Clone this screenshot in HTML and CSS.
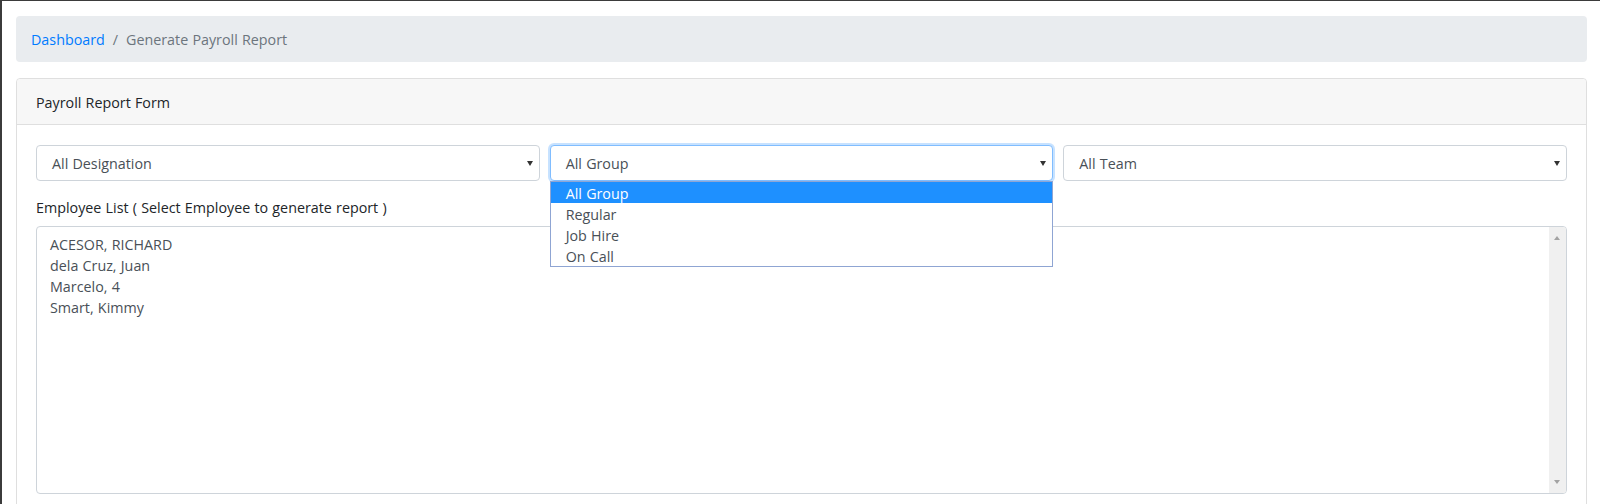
FILE: index.html
```html
<!DOCTYPE html>
<html lang="en">
<head>
<meta charset="UTF-8">
<meta name="viewport" content="width=device-width, initial-scale=1.0">
<title>Generate Payroll Report</title>
<link rel="stylesheet" href="styles.css">
</head>
<body>
<div class="frame">
    <div class="container">
        <!-- breadcrumb -->
        <nav class="breadcrumb">
            <a href="#">Dashboard</a>
            <span class="sep">/</span>
            <span class="active">Generate Payroll Report</span>
        </nav>
        <!-- form card -->
        <div class="card">
            <div class="card-header">Payroll Report Form</div>
            <div class="card-body">
                <div class="filter-row">
                    <div class="select">All Designation<span class="caret"></span></div>
                    <div class="select-wrap">
                        <div class="select focus">All Group<span class="caret"></span></div>
                        <ul class="dropdown">
                            <li class="selected">All Group</li>
                            <li>Regular</li>
                            <li>Job Hire</li>
                            <li>On Call</li>
                        </ul>
                    </div>
                    <div class="select">All Team<span class="caret"></span></div>
                </div>
                <div class="list-label">Employee List ( Select Employee to generate report )</div>
                <div class="listbox">
                    <ul class="options">
                        <li>ACESOR, RICHARD</li>
                        <li>dela Cruz, Juan</li>
                        <li>Marcelo, 4</li>
                        <li>Smart, Kimmy</li>
                    </ul>
                    <div class="scrollbar">
                        <span class="arrow up"></span>
                        <span class="arrow down"></span>
                    </div>
                </div>
            </div>
        </div>
    </div>
</div>
</body>
</html>
```
FILE: styles.css
```css
body {
    margin: 0;
    padding: 0;
    font-family: "Open Sans", "Noto Sans", sans-serif;
    font-size: 14.3px;
    line-height: 21px;
    word-spacing: 0.5px;
    color: #212529;
    background: #fff;
    height: 504px;
    overflow: hidden;
}
/* window frame */
.frame {
    border-left: 2px solid #3b3b3b;
    border-top: 1px solid #3b3b3b;
    min-height: 503px;
}
.container {
    padding: 15px 13px 0 14px;
}
/* breadcrumb */
.breadcrumb {
    display: flex;
    align-items: center;
    padding: 13px 15px 12px;
    margin-bottom: 16px;
    background-color: #e9ecef;
    border-radius: 4px;
}
.breadcrumb a {
    color: #007bff;
    text-decoration: none;
}
.breadcrumb .sep {
    color: #6c757d;
    padding: 0 8px;
}
.breadcrumb .active {
    color: #6c757d;
}
/* card */
.card {
    border: 1px solid #dfdfdf;
    border-radius: 4px;
}
.card-header {
    padding: 13px 19px 11px;
    background-color: #f7f7f7;
    border-bottom: 1px solid #dfdfdf;
    border-radius: 4px 4px 0 0;
}
.card-body {
    padding: 20px 19px;
}
.filter-row {
    display: grid;
    grid-template-columns: repeat(3, 1fr);
    gap: 10px;
    margin-bottom: 16px;
}
.select-wrap {
    position: relative;
}
.select {
    position: relative;
    height: 34px;
    line-height: 35px;
    padding: 0 26px 0 15px;
    border: 1px solid #ced4da;
    border-radius: 4px;
    color: #495057;
    background: #fff;
}
.select.focus {
    border-color: #80bdff;
    box-shadow: 0 0 0 2px rgba(0, 123, 255, 0.22);
}
.caret {
    position: absolute;
    right: 6px;
    top: 15px;
    border-left: 3px solid transparent;
    border-right: 3px solid transparent;
    border-top: 5px solid #333;
}
/* open dropdown of the group select */
.dropdown {
    position: absolute;
    top: 36px;
    left: 0;
    right: 0;
    margin: 0;
    padding: 0;
    list-style: none;
    background: #fff;
    border: 1px solid #8fa5d3;
    z-index: 10;
}
.dropdown li {
    box-sizing: border-box;
    height: 21px;
    padding: 2px 0 0 15px;
    line-height: 19px;
    color: #495057;
}
.dropdown li.selected {
    background-color: #1e90ff;
    color: #fff;
}
.list-label {
    margin-bottom: 8px;
}
/* employee listbox */
.listbox {
    display: flex;
    height: 266px;
    border: 1px solid #ced4da;
    border-radius: 4px;
    overflow: hidden;
}
.options {
    flex: 1;
    margin: 0;
    padding: 7px 13px;
    list-style: none;
    color: #495057;
}
.scrollbar {
    position: relative;
    width: 17px;
    background-color: #f0f0f0;
}
.arrow {
    position: absolute;
    left: 5px;
    border-left: 3.5px solid transparent;
    border-right: 3.5px solid transparent;
}
.arrow.up {
    top: 9px;
    border-bottom: 4px solid #a3a3a3;
}
.arrow.down {
    bottom: 9px;
    border-top: 4px solid #a3a3a3;
}
```
